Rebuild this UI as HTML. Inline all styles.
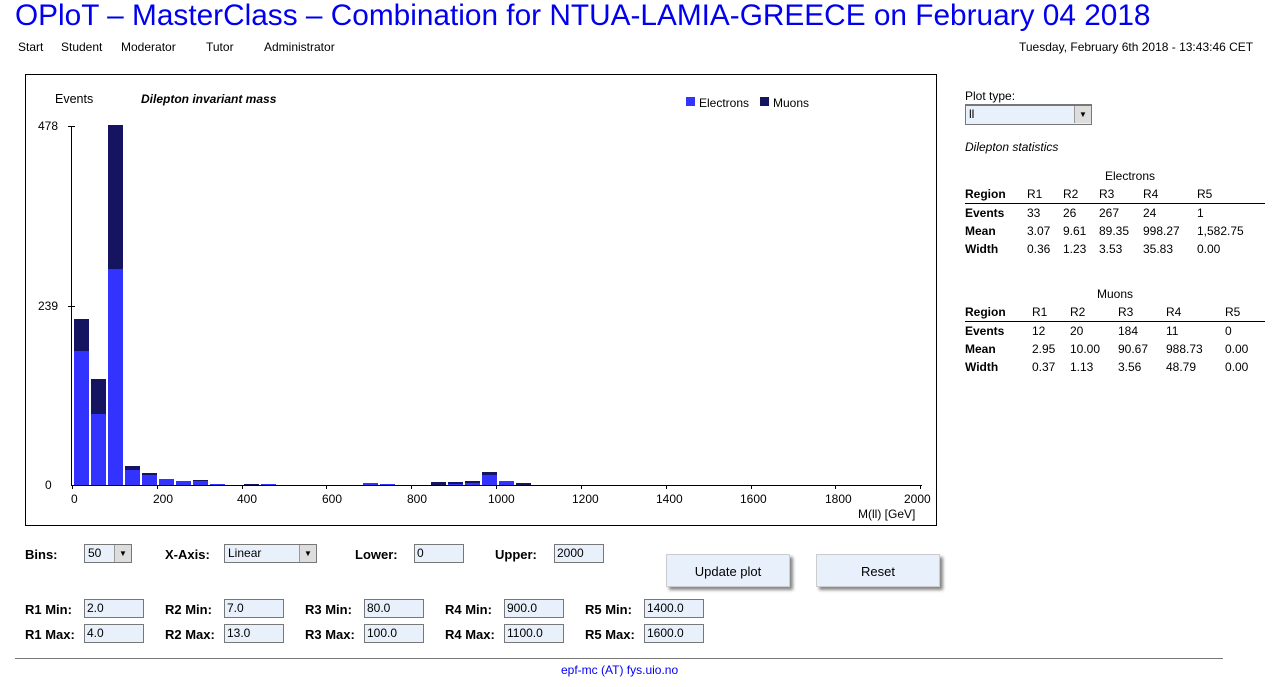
<!DOCTYPE html>
<html><head><meta charset="utf-8"><style>
body{margin:0;width:1273px;height:687px;background:#fff;font-family:"Liberation Sans",Arial,sans-serif;position:relative;overflow:hidden}
.a{position:absolute;white-space:nowrap}
h1{position:absolute;left:15px;top:-1px;margin:0;font-weight:normal;font-size:29.8px;color:#0000ee;white-space:nowrap}
.nav{font-size:12px;top:40px}
.lbl{font-size:13px;font-weight:bold}
.inp{position:absolute;border:1px solid #777;background:#e8f0fb;font-size:12px;line-height:17px;padding-left:2px;box-sizing:border-box;height:19px}
.sel{position:absolute;height:19px;border:1px solid #777;background:#e8f0fb;font-size:12px;line-height:17px;padding-left:3px;box-sizing:border-box}
.sel i{position:absolute;right:0;top:0;width:16px;height:17px;background:#ddd;border-left:1px solid #999;font-style:normal;font-size:8px;text-align:center;line-height:17px}
.btn{position:absolute;width:124px;height:33px;background:#e8f0fb;border:1px solid #ccc;box-shadow:3px 3px 3px #888;font-size:13px;text-align:center;line-height:33px;box-sizing:border-box}
table{border-collapse:collapse;font-size:12px}
td{padding:0;height:18px}
</style></head><body>
<h1>OPloT – MasterClass – Combination for NTUA-LAMIA-GREECE on February 04 2018</h1>
<div class="a nav" style="left:18px">Start</div>
<div class="a nav" style="left:61px">Student</div>
<div class="a nav" style="left:121px">Moderator</div>
<div class="a nav" style="left:206px">Tutor</div>
<div class="a nav" style="left:264px">Administrator</div>
<div class="a nav" style="left:1019px">Tuesday, February 6th 2018 - 13:43:46 CET</div>

<svg class="a" style="left:0;top:0" width="1273" height="687" font-family="Liberation Sans, Arial, sans-serif">
<rect x="25.5" y="74.5" width="911" height="451" fill="none" stroke="#000"/>
<text x="55" y="103" font-size="12.5">Events</text>
<text x="141" y="103" font-size="12" font-style="italic" font-weight="bold">Dilepton invariant mass</text>
<rect x="686" y="97" width="9" height="9" fill="#3333ff"/><text x="699" y="107" font-size="12">Electrons</text>
<rect x="760" y="97" width="9" height="9" fill="#141460"/><text x="773" y="107" font-size="12">Muons</text>
<line x1="71.5" y1="126" x2="71.5" y2="486" stroke="#000"/>
<line x1="68" y1="126.5" x2="75" y2="126.5" stroke="#000"/>
<line x1="68" y1="306.5" x2="75" y2="306.5" stroke="#000"/>
<line x1="71" y1="485.5" x2="922" y2="485.5" stroke="#000"/>
<text x="38" y="130" font-size="12">478</text>
<text x="38" y="310" font-size="12">239</text>
<text x="45" y="489" font-size="12">0</text>
<g fill="#3333ff">
<rect x="74" y="351" width="15" height="134"/>
<rect x="91" y="414" width="15" height="71"/>
<rect x="108" y="269" width="15" height="216"/>
<rect x="125" y="470" width="15" height="15"/>
<rect x="142" y="475" width="15" height="10"/>
<rect x="159" y="479" width="15" height="6"/>
<rect x="176" y="481" width="15" height="4"/>
<rect x="193" y="481" width="15" height="4"/>
<rect x="210" y="484" width="15" height="1"/>
<rect x="261" y="484" width="15" height="1"/>
<rect x="363" y="483" width="15" height="2"/>
<rect x="380" y="484" width="15" height="1"/>
<rect x="448" y="484" width="15" height="1"/>
<rect x="465" y="483" width="15" height="2"/>
<rect x="482" y="475" width="15" height="10"/>
<rect x="499" y="481" width="15" height="4"/>
</g>
<g fill="#141460">
<rect x="74" y="319" width="15" height="32"/>
<rect x="91" y="379" width="15" height="35"/>
<rect x="108" y="125" width="15" height="144"/>
<rect x="125" y="466" width="15" height="4"/>
<rect x="142" y="473" width="15" height="2"/>
<rect x="193" y="480" width="15" height="1"/>
<rect x="244" y="484" width="15" height="1"/>
<rect x="431" y="482" width="15" height="3"/>
<rect x="448" y="482" width="15" height="2"/>
<rect x="465" y="481" width="15" height="2"/>
<rect x="482" y="472" width="15" height="3"/>
<rect x="516" y="483" width="15" height="2"/>
</g>
<g stroke="#000">
<line x1="72.5" y1="486" x2="72.5" y2="489"/><line x1="157.5" y1="486" x2="157.5" y2="489"/><line x1="242.5" y1="486" x2="242.5" y2="489"/><line x1="326.5" y1="486" x2="326.5" y2="489"/><line x1="411.5" y1="486" x2="411.5" y2="489"/><line x1="496.5" y1="486" x2="496.5" y2="489"/><line x1="581.5" y1="486" x2="581.5" y2="489"/><line x1="666.5" y1="486" x2="666.5" y2="489"/><line x1="751.5" y1="486" x2="751.5" y2="489"/><line x1="835.5" y1="486" x2="835.5" y2="489"/><line x1="920.5" y1="486" x2="920.5" y2="489"/>
</g>
<g font-size="12">
<text x="71" y="503">0</text><text x="153" y="503">200</text><text x="237" y="503">400</text><text x="322" y="503">600</text><text x="407" y="503">800</text><text x="488" y="503">1000</text><text x="572" y="503">1200</text><text x="656" y="503">1400</text><text x="740" y="503">1600</text><text x="825" y="503">1800</text><text x="904" y="503">2000</text>
<text x="858" y="518">M(ll) [GeV]</text>
</g>
<line x1="15" y1="658.5" x2="1223" y2="658.5" stroke="#777"/>
</svg>

<div class="a" style="left:965px;top:89px;font-size:12px">Plot type:</div>
<div class="sel" style="left:965px;top:104px;width:127px;height:21px;border-top:2px solid #777">ll<i>▼</i></div>
<div class="a" style="left:965px;top:140px;font-size:12px;font-style:italic">Dilepton statistics</div>

<table class="a" style="left:965px;top:167px;width:300px">
<tr><td colspan="6" style="text-align:center;padding-left:30px">Electrons</td></tr>
<tr style="border-bottom:1px solid #000"><td style="width:62px"><b>Region</b></td><td style="width:36px">R1</td><td style="width:36px">R2</td><td style="width:44px">R3</td><td style="width:54px">R4</td><td>R5</td></tr>
<tr><td><b>Events</b></td><td>33</td><td>26</td><td>267</td><td>24</td><td>1</td></tr>
<tr><td><b>Mean</b></td><td>3.07</td><td>9.61</td><td>89.35</td><td>998.27</td><td>1,582.75</td></tr>
<tr><td><b>Width</b></td><td>0.36</td><td>1.23</td><td>3.53</td><td>35.83</td><td>0.00</td></tr>
</table>
<table class="a" style="left:965px;top:285px;width:300px">
<tr><td colspan="6" style="text-align:center;padding-left:0">Muons</td></tr>
<tr style="border-bottom:1px solid #000"><td style="width:67px"><b>Region</b></td><td style="width:38px">R1</td><td style="width:48px">R2</td><td style="width:48px">R3</td><td style="width:59px">R4</td><td>R5</td></tr>
<tr><td><b>Events</b></td><td>12</td><td>20</td><td>184</td><td>11</td><td>0</td></tr>
<tr><td><b>Mean</b></td><td>2.95</td><td>10.00</td><td>90.67</td><td>988.73</td><td>0.00</td></tr>
<tr><td><b>Width</b></td><td>0.37</td><td>1.13</td><td>3.56</td><td>48.79</td><td>0.00</td></tr>
</table>

<div class="a lbl" style="left:25px;top:547px">Bins:</div>
<div class="sel" style="left:84px;top:544px;width:48px">50<i>▼</i></div>
<div class="a lbl" style="left:165px;top:547px">X-Axis:</div>
<div class="sel" style="left:224px;top:544px;width:93px">Linear<i>▼</i></div>
<div class="a lbl" style="left:355px;top:547px">Lower:</div>
<div class="inp" style="left:414px;top:544px;width:50px">0</div>
<div class="a lbl" style="left:495px;top:547px">Upper:</div>
<div class="inp" style="left:554px;top:544px;width:50px">2000</div>
<div class="btn" style="left:666px;top:554px">Update plot</div>
<div class="btn" style="left:816px;top:554px">Reset</div>

<div class="a lbl" style="left:25px;top:602px">R1 Min:</div><div class="inp" style="left:84px;top:599px;width:60px">2.0</div>
<div class="a lbl" style="left:165px;top:602px">R2 Min:</div><div class="inp" style="left:224px;top:599px;width:60px">7.0</div>
<div class="a lbl" style="left:305px;top:602px">R3 Min:</div><div class="inp" style="left:364px;top:599px;width:60px">80.0</div>
<div class="a lbl" style="left:445px;top:602px">R4 Min:</div><div class="inp" style="left:504px;top:599px;width:60px">900.0</div>
<div class="a lbl" style="left:585px;top:602px">R5 Min:</div><div class="inp" style="left:644px;top:599px;width:60px">1400.0</div>
<div class="a lbl" style="left:25px;top:627px">R1 Max:</div><div class="inp" style="left:84px;top:624px;width:60px">4.0</div>
<div class="a lbl" style="left:165px;top:627px">R2 Max:</div><div class="inp" style="left:224px;top:624px;width:60px">13.0</div>
<div class="a lbl" style="left:305px;top:627px">R3 Max:</div><div class="inp" style="left:364px;top:624px;width:60px">100.0</div>
<div class="a lbl" style="left:445px;top:627px">R4 Max:</div><div class="inp" style="left:504px;top:624px;width:60px">1100.0</div>
<div class="a lbl" style="left:585px;top:627px">R5 Max:</div><div class="inp" style="left:644px;top:624px;width:60px">1600.0</div>

<div class="a" style="left:561px;top:663px;font-size:12px;color:#0000ee">epf-mc (AT) fys.uio.no</div>
</body></html>
